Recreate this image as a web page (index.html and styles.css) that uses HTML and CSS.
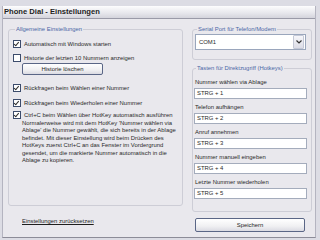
FILE: index.html
```html
<!DOCTYPE html>
<html>
<head>
  <link rel="stylesheet" href="styles.css">
</head>
<body>
  <div class="window">
    <div class="titlebar">Phone Dial - Einstellungen</div>
    <div class="dialog">
      <div class="left-column">
        <fieldset class="group general">
          <legend>Allgemeine Einstellungen</legend>
          <div class="check-row first"><span class="check on"></span>Automatisch mit Windows starten</div>
          <div class="check-row second"><span class="check"></span>Historie der letzten 10 Nummern anzeigen</div>
          <div class="button history">Historie löschen</div>
          <div class="check-row third"><span class="check on"></span>Rückfragen beim Wählen einer Nummer</div>
          <div class="check-row fourth"><span class="check on"></span>Rückfragen beim Wiederholen einer Nummer</div>
          <div class="check-row fifth"><span class="check on"></span>Ctrl+C beim Wählen über HotKey automatisch ausführen</div>
          <p class="note">Normalerweise wird mit dem HotKey 'Nummer wählen via<br>Ablage' die Nummer gewählt, die sich bereits in der Ablage<br>befindet. Mit dieser Einstellung wird beim Drücken des<br>HotKeys zuerst Ctrl+C an das Fenster im Vordergrund<br>gesendet, um die markierte Nummer automatisch in die<br>Ablage zu kopieren.</p>
        </fieldset>
        <a class="reset-link">Einstellungen zurücksetzen</a>
      </div>

      <div class="right-column">
        <fieldset class="group port">
          <legend>Serial Port für Telefon/Modem</legend>
          <div class="select">
            <span class="select-value">COM1</span>
            <span class="select-arrow">
              <svg width="6" height="4" viewBox="0 0 6 4"><path d="M0.5 0.5 L3 3 L5.5 0.5" fill="none" stroke="#333" stroke-width="1.2"/></svg>
            </span>
          </div>
        </fieldset>

        <fieldset class="group hotkeys">
          <legend>Tasten für Direktzugriff (Hotkeys)</legend>
          <div class="field">
            <div class="field-label">Nummer wählen via Ablage</div>
            <div class="text-input">STRG + 1</div>
          </div>
          <div class="field">
            <div class="field-label">Telefon aufhängen</div>
            <div class="text-input">STRG + 2</div>
          </div>
          <div class="field">
            <div class="field-label">Anruf annehmen</div>
            <div class="text-input">STRG + 3</div>
          </div>
          <div class="field">
            <div class="field-label">Nummer manuell eingeben</div>
            <div class="text-input">STRG + 4</div>
          </div>
          <div class="field">
            <div class="field-label">Letzte Nummer wiederholen</div>
            <div class="text-input">STRG + 5</div>
          </div>
        </fieldset>

        <div class="button save">Speichern</div>
      </div>
    </div>
  </div>
</body>
</html>
```

FILE: styles.css
```css
body {
  margin: 0;
  width: 320px;
  height: 240px;
  overflow: hidden;
  background-color: #dcdce4;
  font-family: "Liberation Sans", Arial, sans-serif;
  font-size: 5.9px;
  color: #2a2a2a;
}

.window {
  margin: 6px 4px 0 2px;
  height: 231px;
  background-color: #e9e8ed;
  border-left: 1px solid #b4b4c0;
  border-right: 1px solid #b4b4c0;
  border-bottom: 1px solid #8c8c98;
}

.titlebar {
  height: 12px;
  line-height: 12px;
  padding-left: 1px;
  background: linear-gradient(#fdfdfe, #e6e6ec 60%, #d4d4dc);
  border-bottom: 1px solid #9a9aa8;
  font-size: 7.6px;
  font-weight: bold;
  color: #1e1e1e;
}

.dialog {
  display: flex;
  padding: 6px 0 0 5px;
}

.left-column {
  width: 175px;
}

.right-column {
  width: 120px;
  margin-left: 9px;
}

/* group boxes */

.group {
  margin: 0;
  padding: 0;
  min-width: 0;
  border: 1px solid #cdcdd6;
  border-radius: 3px;
}

.group legend {
  margin-left: 2px;
  padding: 0 1px;
  line-height: 8px;
  color: #4b67a6;
}

.general {
  height: 179px;
  padding-left: 4px;
}

.port {
  height: 33px;
  padding-left: 2px;
}

.hotkeys {
  margin-top: 4px;
  height: 140px;
  padding: 6px 0 0 1px;
}

/* checkboxes */

.check-row {
  display: flex;
  align-items: center;
  height: 9px;
  white-space: nowrap;
}

.check-row.first { margin-top: 6px; }
.check-row.second { margin-top: 5px; }
.check-row.third { margin-top: 8px; }
.check-row.fourth { margin-top: 6px; }
.check-row.fifth { margin-top: 3px; }

.check {
  width: 6px;
  height: 6px;
  margin-right: 3px;
  background-color: #fff;
  border: 1px solid #3c4c6c;
  position: relative;
}

.check.on::after {
  content: "";
  position: absolute;
  left: 1px;
  top: 0;
  width: 2px;
  height: 3.5px;
  border-right: 1.3px solid #2a2a2a;
  border-bottom: 1.3px solid #2a2a2a;
  transform: rotate(40deg);
}

.note {
  margin: 1px 0 0 9px;
  white-space: nowrap;
  line-height: 7.4px;
}

/* buttons */

.button {
  height: 10px;
  line-height: 10px;
  text-align: center;
  background: linear-gradient(#ffffff, #f0f0f2 60%, #dadae2);
  border: 1px solid #5a6686;
  border-radius: 2px;
  color: #1e1e1e;
}

.button.history {
  width: 79px;
  margin: 1px 0 0 9px;
}

.button.save {
  width: 108px;
  height: 12px;
  line-height: 12px;
  margin: 6px 0 0 3px;
}

.reset-link {
  display: block;
  margin: 12px 0 0 14px;
  text-decoration: underline;
  color: #1e1e1e;
}

/* select */

.select {
  display: flex;
  align-items: center;
  width: 109px;
  height: 14px;
  margin-top: 1px;
  background-color: #fff;
  border: 1px solid #9aa6bc;
}

.select-value {
  flex: 1;
  padding-left: 3px;
}

.select-arrow {
  display: flex;
  align-items: center;
  justify-content: center;
  width: 9px;
  height: 12px;
  margin-right: 1px;
  background: linear-gradient(#f6f6fa, #dcdce6);
  border: 1px solid #c4c8d6;
  border-radius: 1px;
}

/* hotkey fields */

.field {
  margin-bottom: 4px;
}

.field-label {
  height: 9px;
  line-height: 9px;
  margin: 0 0 1px 1px;
}

.text-input {
  width: 109px;
  height: 9px;
  line-height: 9px;
  padding-left: 2px;
  background-color: #fff;
  border: 1px solid #a4acbc;
}
```
